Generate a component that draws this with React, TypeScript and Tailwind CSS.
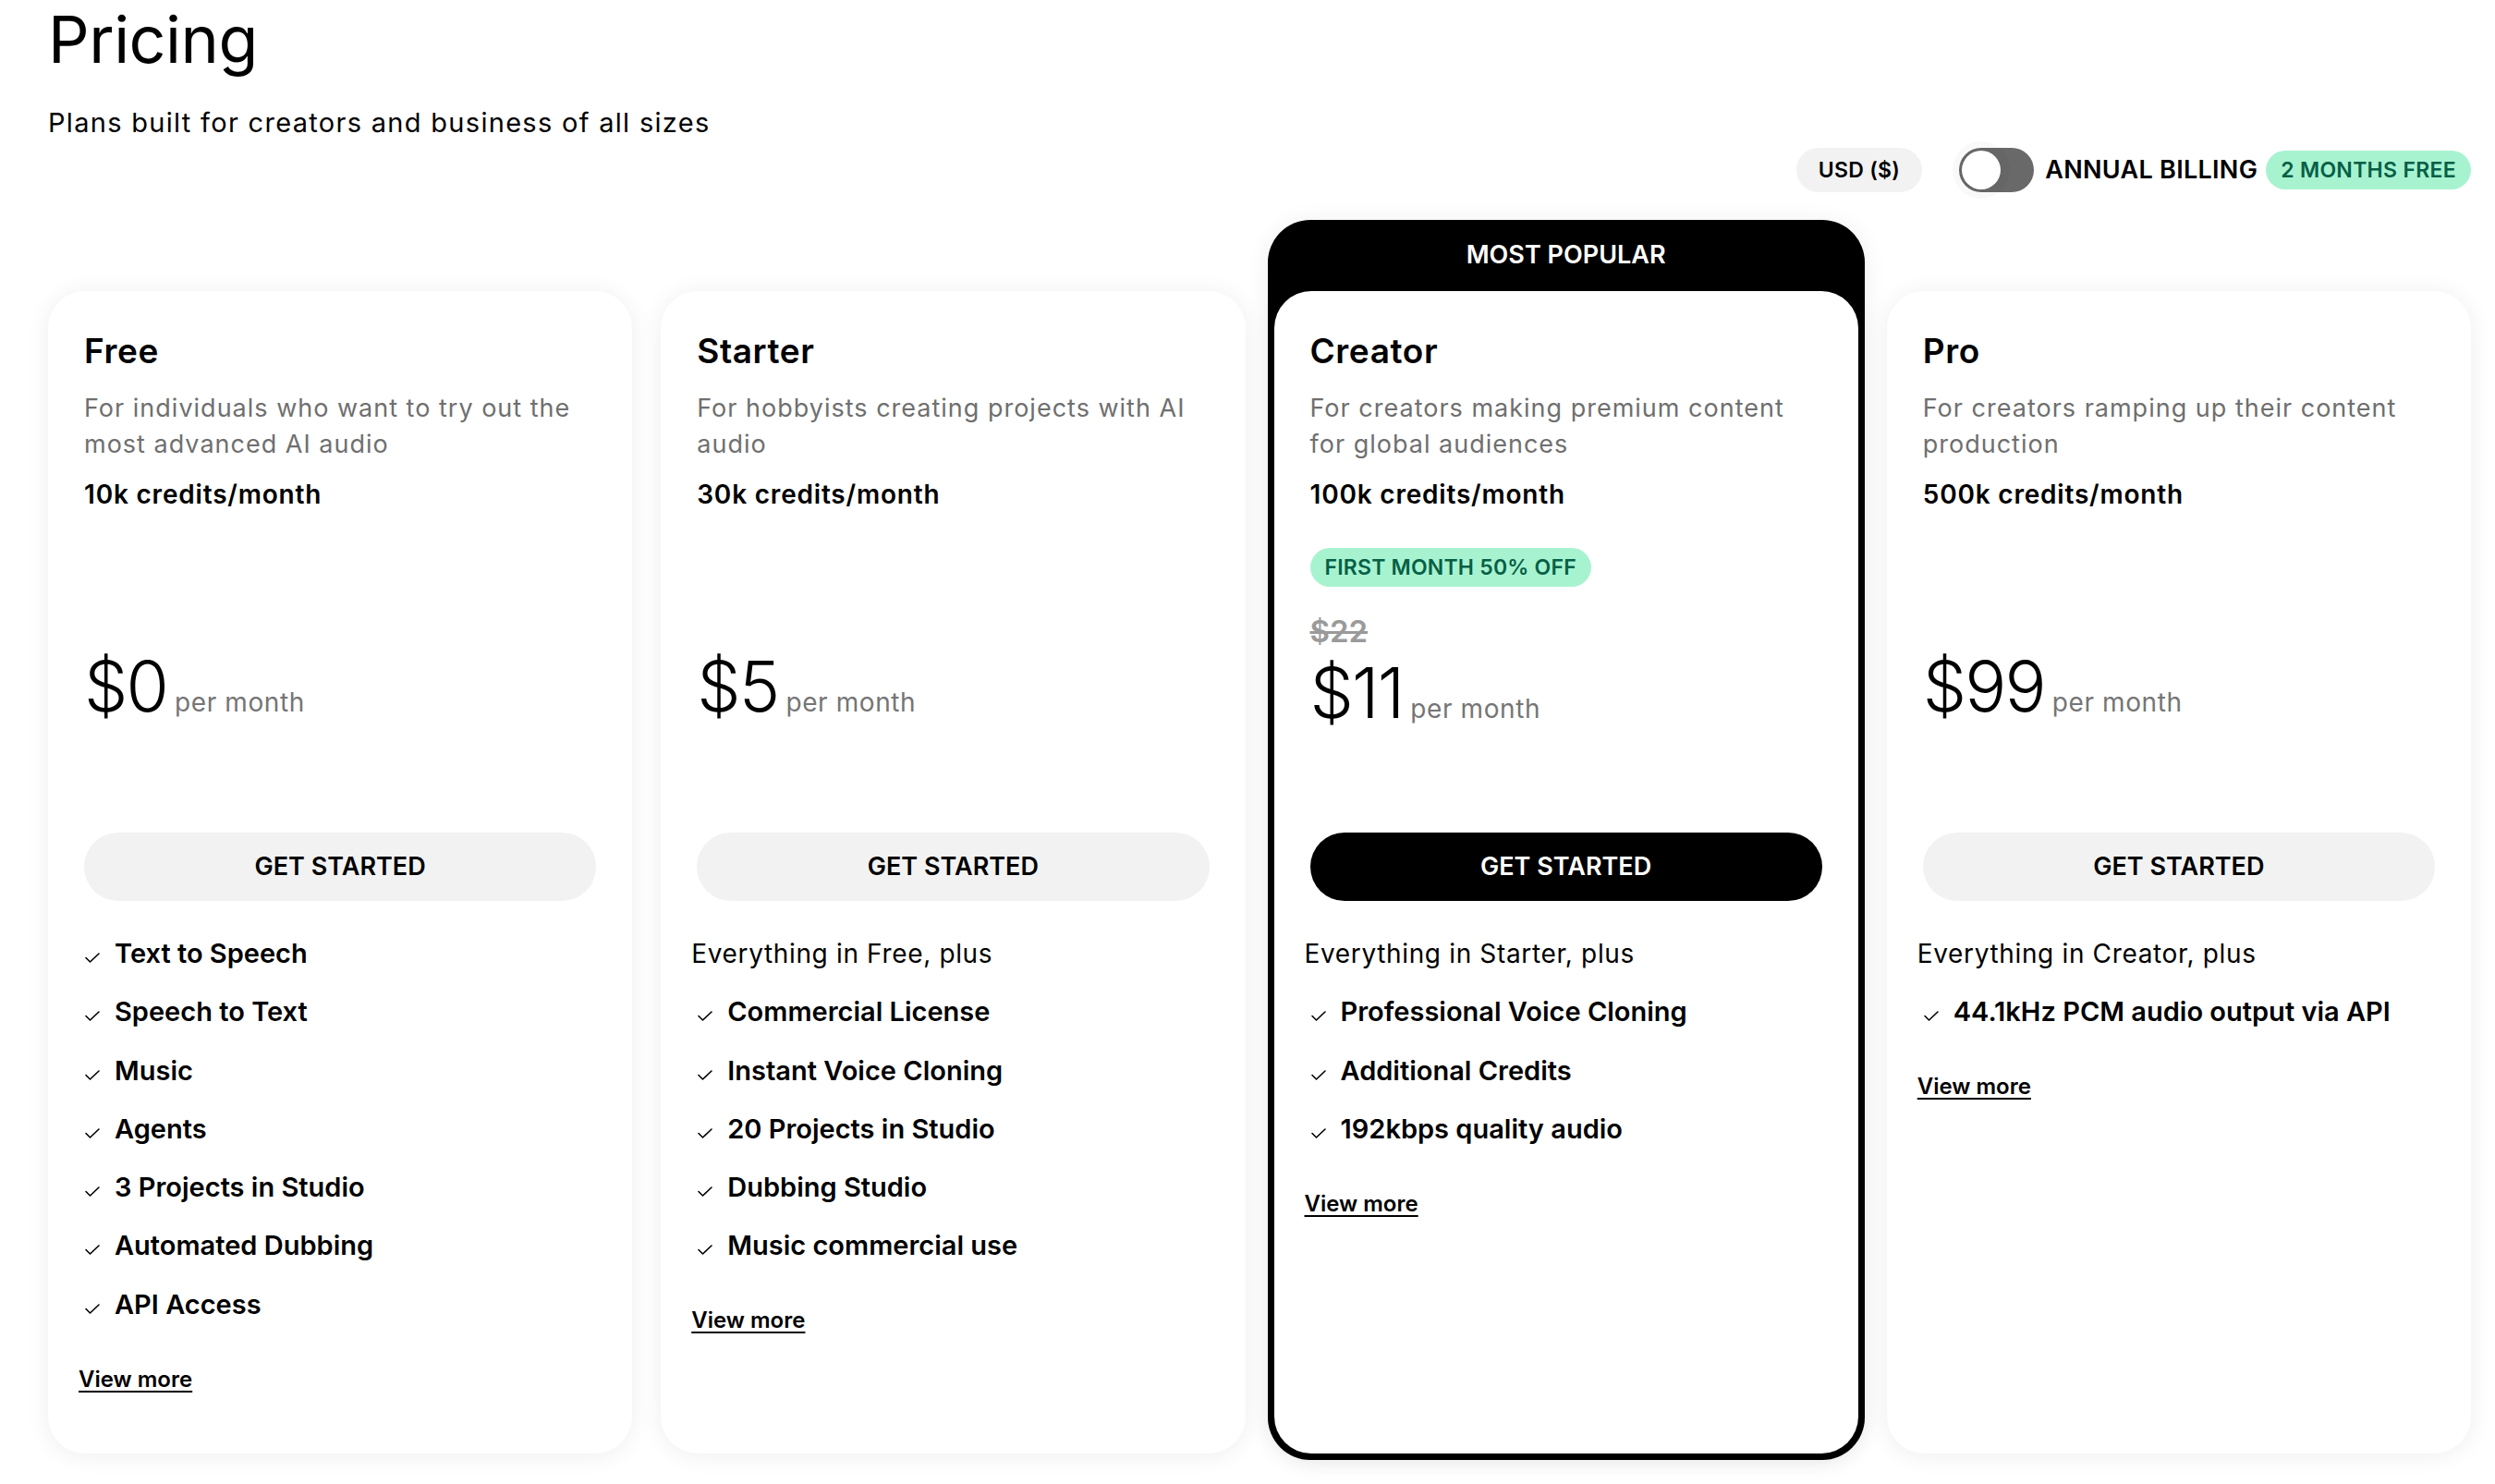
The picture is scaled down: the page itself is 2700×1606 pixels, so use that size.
import React from 'react';

type Plan = {
  name: string;
  desc: string;
  credits: string;
  price: string;
  intro?: string;
  features: string[];
  popular?: boolean;
};

const plans: Plan[] = [
  {
    name: 'Free',
    desc: 'For individuals who want to try out the most advanced AI audio',
    credits: '10k credits/month',
    price: '$0',
    features: ['Text to Speech', 'Speech to Text', 'Music', 'Agents', '3 Projects in Studio', 'Automated Dubbing', 'API Access'],
  },
  {
    name: 'Starter',
    desc: 'For hobbyists creating projects with AI audio',
    credits: '30k credits/month',
    price: '$5',
    intro: 'Everything in Free, plus',
    features: ['Commercial License', 'Instant Voice Cloning', '20 Projects in Studio', 'Dubbing Studio', 'Music commercial use'],
  },
  {
    name: 'Creator',
    desc: 'For creators making premium content for global audiences',
    credits: '100k credits/month',
    price: '$11',
    intro: 'Everything in Starter, plus',
    features: ['Professional Voice Cloning', 'Additional Credits', '192kbps quality audio'],
    popular: true,
  },
  {
    name: 'Pro',
    desc: 'For creators ramping up their content production',
    credits: '500k credits/month',
    price: '$99',
    intro: 'Everything in Creator, plus',
    features: ['44.1kHz PCM audio output via API'],
  },
];

function Check() {
  return (
    <svg width="16" height="11" viewBox="0 0 16 11" fill="none" className="shrink-0">
      <path d="M1 5.5 L5.5 10 L15 1" stroke="#000" strokeWidth="1.6" strokeLinecap="round" strokeLinejoin="round" />
    </svg>
  );
}

function PlanCard({ plan }: { plan: Plan }) {
  return (
    <div className="flex h-full flex-col rounded-[40px] bg-white pt-[43px] pb-[64px] shadow-[0_2px_26px_rgba(0,0,0,0.07)]">
      <div className="px-[39px]">
        <h2 className="text-[37px] leading-[44px] font-semibold tracking-[0.6px]">{plan.name}</h2>
        <p className="mt-[20px] text-[27px] leading-[39px] tracking-[1px] text-[#6f6f6f]">{plan.desc}</p>
        <p className="mt-[17px] text-[28px] leading-[36px] font-semibold tracking-[0.8px]">{plan.credits}</p>

        <div className="h-[348px]">
          {plan.popular ? (
            <div className="pt-[40px]">
              <span className="inline-flex h-[42px] items-center rounded-full bg-[#a7f3d0] px-[16px] text-[23px] font-semibold tracking-[0.2px] text-[#065f46]">
                FIRST MONTH 50% OFF
              </span>
              <p className="mt-[28px] text-[33px] leading-[40px] font-semibold text-[#9a9a9a] line-through">$22</p>
              <div className="mt-[2px] flex items-baseline gap-[8px]">
                <span className="text-[75px] leading-[90px] font-light tracking-tight">{plan.price}</span>
                <span className="text-[28px] tracking-[0.6px] text-[#757575]">per month</span>
              </div>
            </div>
          ) : (
            <div className="flex items-baseline gap-[8px] pt-[145px]">
              <span className="text-[75px] leading-[90px] font-light tracking-tight">{plan.price}</span>
              <span className="text-[28px] tracking-[0.6px] text-[#757575]">per month</span>
            </div>
          )}
        </div>

        <button
          className={
            plan.popular
              ? 'flex h-[74px] w-full items-center justify-center rounded-full bg-black text-[27px] font-semibold text-white'
              : 'flex h-[74px] w-full items-center justify-center rounded-full bg-[#f2f2f2] text-[27px] font-semibold text-black'
          }
        >
          GET STARTED
        </button>
      </div>

      <div className="mt-[39px] px-[33px]">
        <ul className="flex flex-col gap-[27.3px]">
          {plan.intro && <li className="text-[28px] leading-[36px] tracking-[0.65px]">{plan.intro}</li>}
          {plan.features.map((f) => (
            <li key={f} className="flex items-baseline gap-[16px] pl-[7px] text-[29px] leading-[36px] font-semibold">
              <Check />
              <span>{f}</span>
            </li>
          ))}
        </ul>
        <a href="#" className="mt-[47px] block text-[24px] leading-[32px] font-semibold underline underline-offset-4">
          View more
        </a>
      </div>
    </div>
  );
}

export default function App() {
  return (
    <div className="min-h-screen bg-white pl-[52px] pr-[26px] font-['Inter',sans-serif] text-black">
      <h1 className="pt-[8px] text-[70px] leading-[70px] font-normal tracking-[-0.5px]">Pricing</h1>
      <p className="mt-[37px] text-[29px] leading-[36px] tracking-[1.3px]">Plans built for creators and business of all sizes</p>

      <div className="mt-[9px] flex h-[48px] items-center justify-end">
        <span className="flex h-[48px] items-center rounded-full bg-[#f2f2f2] px-[24px] text-[23px] font-semibold tracking-[0.3px]">
          USD ($)
        </span>
        <span className="relative ml-[40px] h-[48px] w-[81px] rounded-full bg-[#696969]">
          <span className="absolute top-[3px] left-[3px] h-[42px] w-[42px] rounded-full bg-white shadow-[0_0_0_10px_rgba(0,0,0,0.025)]" />
        </span>
        <span className="ml-[12px] text-[27px] font-semibold tracking-[0.3px]">ANNUAL BILLING</span>
        <span className="ml-[9px] flex h-[42px] items-center rounded-full bg-[#a7f3d0] px-[16px] text-[23px] font-semibold tracking-[0.3px] text-[#065f46]">
          2 MONTHS FREE
        </span>
      </div>

      <div className="mt-[107px] grid grid-cols-4 gap-[31px] pb-[40px]">
        {plans.map((p) =>
          p.popular ? (
            <div key={p.name} className="-mx-[7px] -mt-[77px] -mb-[7px] flex flex-col rounded-[46px] bg-black px-[7px] pb-[7px] shadow-[0_2px_26px_rgba(0,0,0,0.07)]">
              <div className="flex h-[77px] items-center justify-center text-[27px] font-semibold text-white">
                MOST POPULAR
              </div>
              <div className="flex-1">
                <PlanCard plan={p} />
              </div>
            </div>
          ) : (
            <PlanCard key={p.name} plan={p} />
          )
        )}
      </div>
    </div>
  );
}
